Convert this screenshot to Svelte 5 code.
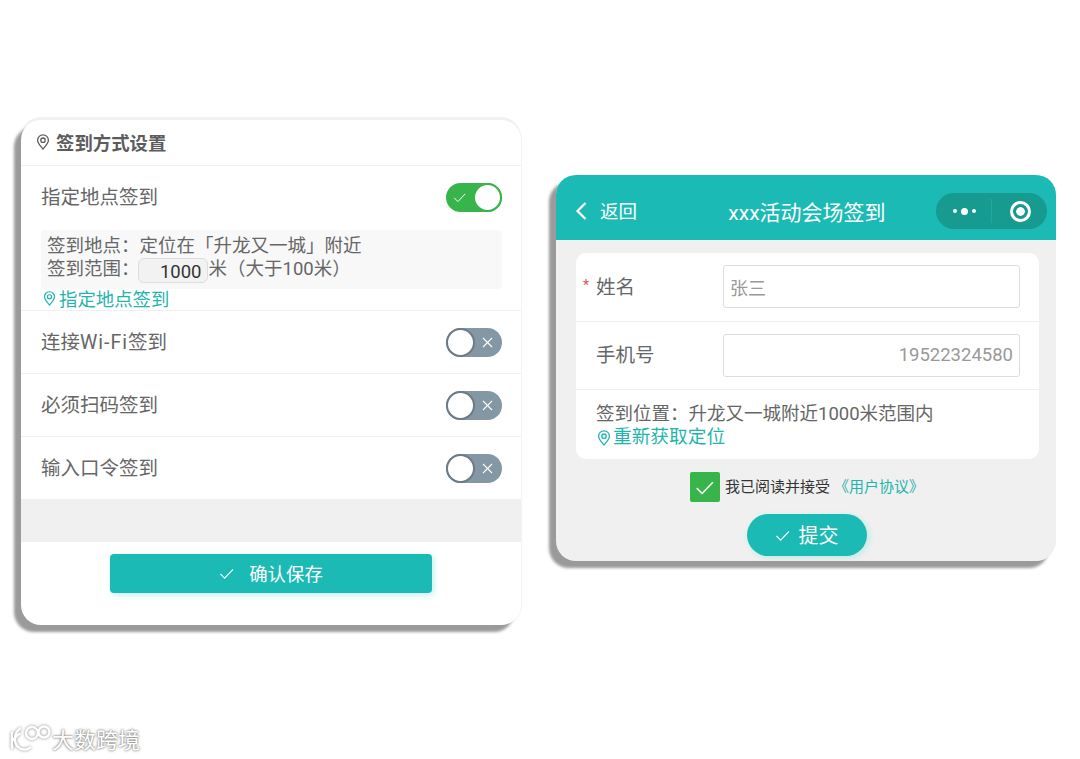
<script>
	// '|' marks the latin part of a label, it is set a little wider
	const toggles = ['连接|Wi-Fi|签到', '必须扫码签到', '输入口令签到'];
</script>

{#snippet pin(size)}
	<svg class="pin" width={size} height={size} viewBox="0 0 16 16" fill="none" stroke="currentColor" stroke-width="1.3">
		<path d="M8 15C5 11.6 2.6 9 2.6 6.2a5.4 5.4 0 0 1 10.8 0C13.4 9 11 11.6 8 15z" />
		<circle cx="8" cy="6.2" r="2.2" />
	</svg>
{/snippet}

{#snippet check(size, width = 1.2)}
	<svg width={size} height={size} viewBox="0 0 16 16" fill="none" stroke="currentColor" stroke-width={width}>
		<path d="M1.5 8.5l4.5 4.5 9-9.5" />
	</svg>
{/snippet}

<div class="stage">
	<section class="card settings">
		<h2 class="settings-title">{@render pin(16)}签到方式设置</h2>

		<div class="first-block">
			<div class="row first-row">
				<span>指定地点签到</span>
				<span class="toggle on">
					<span class="mark">{@render check(13)}</span>
					<span class="knob"></span>
				</span>
			</div>
			<div class="location-box">
				<div>签到地点：定位在「升龙又一城」附近</div>
				<div class="range">
					<span>签到范围：</span><span class="range-input">1000</span><span>米（大于100米）</span>
				</div>
			</div>
			<div class="link small-link">{@render pin(15)}指定地点签到</div>
		</div>

		{#each toggles as label}
			<div class="row">
				<span>
					{#each label.split('|') as part, i}<span class:latin={i === 1}>{part}</span>{/each}
				</span>
				<span class="toggle">
					<span class="knob"></span>
					<svg class="cross" width="11" height="11" viewBox="0 0 11 11" stroke="currentColor" stroke-width="1.1">
						<path d="M1 1l9 9M10 1l-9 9" />
					</svg>
				</span>
			</div>
		{/each}

		<div class="spacer"></div>
		<div class="save-wrap">
			<button class="save">{@render check(15)}<span>确认保存</span></button>
		</div>
	</section>

	<section class="card signin">
		<header class="nav">
			<div class="back">
				<svg width="12" height="20" viewBox="0 0 12 20" fill="none" stroke="currentColor" stroke-width="2.2">
					<path d="M10.5 2L2.5 10l8 8" />
				</svg>
				<span>返回</span>
			</div>
			<div class="nav-title">xxx活动会场签到</div>
			<div class="capsule">
				<span class="dots"><i></i><b></b><i></i></span>
				<span class="divider"></span>
				<span class="target"></span>
			</div>
		</header>

		<div class="body">
			<div class="form">
				<div class="field">
					<label><em>*</em>姓名</label>
					<div class="input placeholder">张三</div>
				</div>
				<div class="field">
					<label>手机号</label>
					<div class="input phone">19522324580</div>
				</div>
				<div class="position">
					<div>签到位置：升龙又一城附近1000米范围内</div>
					<div class="link">{@render pin(16)}重新获取定位</div>
				</div>
			</div>

			<div class="agree">
				<span class="checkbox">{@render check(19, 1.3)}</span>
				<span>我已阅读并接受</span>
				<span class="protocol">《用户协议》</span>
			</div>

			<button class="submit">{@render check(15)}<span>提交</span></button>
		</div>
	</section>

	<div class="watermark">
		<svg width="44" height="32" viewBox="0 0 44 32" fill="none" stroke="#fff" stroke-width="2.4">
			<path d="M4 10v17M13 6C6 10 5 20 10 25c4 4 10 3 13 0M4 19l8-8" />
			<circle cx="24" cy="11" r="6" />
			<circle cx="36" cy="10" r="5.5" />
		</svg>
		<span>大数跨境</span>
	</div>
</div>

<style>
	:global(body) {
		background: #fff;
	}
	.stage {
		position: relative;
		width: 1080px;
		height: 759px;
		display: flex;
		align-items: flex-start;
		gap: 35px;
		padding-left: 21px;
		box-sizing: border-box;
		overflow: hidden;
		font-family: Roboto, 'Noto Sans CJK SC', sans-serif;
		color: #666;
	}
	.card {
		width: 500px;
		flex: none;
		box-sizing: border-box;
		border-radius: 20px;
		overflow: hidden;
	}
	.settings {
		margin-top: 120px;
		height: 505px;
		background: #fff;
		box-shadow: -7px 7px 3px #9a9a9a, 0 -3px 0 #f1f1f1, 1px 0 1px #f3f3f3;
		display: flex;
		flex-direction: column;
	}
	.settings-title {
		height: 46px;
		margin: 0;
		padding: 0 0 2px 14px;
		box-sizing: border-box;
		display: flex;
		align-items: center;
		gap: 5px;
		font-size: 18.4px;
		font-weight: 700;
		color: #5c5c5c;
		border-bottom: 1px solid #f0f0f0;
	}
	.first-block {
		height: 145px;
		box-sizing: border-box;
		border-bottom: 1px solid #f0f0f0;
	}
	.row {
		height: 63px;
		box-sizing: border-box;
		padding: 0 19px 0 20px;
		display: flex;
		align-items: center;
		justify-content: space-between;
		font-size: 19.5px;
		color: #666;
		border-bottom: 1px solid #f0f0f0;
	}
	.row > span:first-child {
		margin-top: -4px;
	}
	.latin {
		letter-spacing: 1px;
	}
	.row.first-row {
		height: 64px;
		border-bottom: none;
		padding-bottom: 2px;
	}
	.toggle {
		width: 56px;
		height: 29px;
		box-sizing: border-box;
		border-radius: 15px;
		background: #8497a4;
		color: #fff;
		display: flex;
		align-items: center;
		justify-content: space-between;
		position: relative;
	}
	.toggle .knob {
		width: 29px;
		height: 29px;
		box-sizing: border-box;
		border-radius: 50%;
		background: #fff;
		border: 2px solid #6e7b85;
	}
	.toggle .cross {
		margin-right: 9px;
	}
	.toggle.on {
		background: #38b54a;
	}
	.toggle.on .knob {
		border-color: #38b54a;
	}
	.toggle.on .mark {
		margin-left: 7px;
		display: flex;
	}
	.location-box {
		margin: 0 19px 0 20px;
		height: 59px;
		padding: 0 0 4px 6px;
		box-sizing: border-box;
		background: #f8f8f8;
		border-radius: 4px;
		font-size: 18.5px;
		line-height: 23px;
		color: #666;
		display: flex;
		flex-direction: column;
		justify-content: center;
	}
	.range {
		display: flex;
		align-items: center;
		height: 23px;
	}
	.range-input {
		width: 70px;
		height: 25px;
		box-sizing: border-box;
		margin: 3px 1px 0 -2px;
		padding-right: 5px;
		background: #f2f2f2;
		border: 1px solid #ddd;
		border-radius: 6px;
		text-align: right;
		font-size: 18.5px;
		line-height: 26px;
		color: #333;
	}
	.link {
		display: flex;
		align-items: center;
		color: #1fb5ad;
	}
	.small-link {
		margin: -1px 0 0 21px;
		height: 20px;
		font-size: 18.4px;
		gap: 2px;
	}
	.spacer {
		height: 43px;
		background: #f0f0f0;
		margin-top: -1px;
	}
	.save-wrap {
		padding-top: 12px;
		display: flex;
		justify-content: center;
	}
	.save {
		width: 322px;
		height: 39px;
		border: none;
		border-radius: 4px;
		background: #1cbab4;
		box-shadow: 2px 2px 6px #bff0ec;
		color: #fff;
		font: inherit;
		font-size: 18.4px;
		display: flex;
		align-items: center;
		justify-content: center;
		gap: 15px;
	}
	.save span,
	.submit span {
		margin-top: -2px;
	}
	.signin {
		margin-top: 175px;
		height: 386px;
		background: #f0f0f0;
		box-shadow: -7px 7px 3px #9a9a9a;
		display: flex;
		flex-direction: column;
	}
	.nav {
		height: 65px;
		flex: none;
		box-sizing: border-box;
		background: #1cbab4;
		color: #fff;
		display: grid;
		grid-template-columns: 1fr auto 1fr;
		align-items: center;
		padding: 7px 9px 0 19px;
		font-size: 18.5px;
	}
	.back {
		display: flex;
		align-items: center;
		gap: 13px;
	}
	.back span {
		margin-top: -2px;
	}
	.nav-title {
		margin: -1px 8px 0 0;
		font-size: 21px;
	}
	.capsule {
		justify-self: end;
		width: 111px;
		height: 36px;
		border-radius: 18px;
		background: #179a90;
		display: flex;
		align-items: center;
	}
	.dots {
		width: 55px;
		display: flex;
		align-items: center;
		justify-content: center;
		gap: 4px;
		padding-left: 1px;
		box-sizing: border-box;
	}
	.dots i {
		width: 4px;
		height: 4px;
		border-radius: 50%;
		background: #fff;
	}
	.dots b {
		width: 7px;
		height: 7px;
		border-radius: 50%;
		background: #fff;
	}
	.divider {
		width: 1px;
		height: 24px;
		background: #1ba89e;
	}
	.target {
		width: 21px;
		height: 21px;
		margin-left: 18px;
		box-sizing: border-box;
		border-radius: 50%;
		border: 3px solid #fff;
		background: radial-gradient(circle, #fff 0 4px, transparent 4.6px);
	}
	.body {
		flex: 1;
		padding: 13px 17px 0 20px;
		display: flex;
		flex-direction: column;
		align-items: center;
	}
	.form {
		width: 100%;
		height: 206px;
		background: #fff;
		border-radius: 10px;
		overflow: hidden;
	}
	.field {
		height: 68.5px;
		box-sizing: border-box;
		padding-left: 20px;
		display: flex;
		align-items: center;
		border-bottom: 1px solid #eee;
		font-size: 19.5px;
		color: #666;
		position: relative;
	}
	.field label {
		width: 127px;
		flex: none;
		margin-top: -3px;
	}
	.field em {
		position: absolute;
		left: 7px;
		top: 24px;
		font-style: normal;
		font-size: 14px;
		color: #e0534f;
	}
	.input {
		width: 297px;
		height: 43px;
		box-sizing: border-box;
		border: 1px solid #ddd;
		border-radius: 3px;
		padding: 0 6px;
		display: flex;
		align-items: center;
		font-size: 18px;
		color: #999;
	}
	.phone {
		justify-content: flex-end;
		font-size: 18.5px;
	}
	.position {
		padding: 13px 0 0 20px;
		font-size: 18.5px;
		line-height: 23px;
		color: #666;
	}
	.position .link {
		font-size: 18.7px;
		gap: 1px;
	}
	.agree {
		margin-top: 13px;
		margin-left: -1px;
		height: 30px;
		display: flex;
		align-items: center;
		font-size: 15px;
		color: #333;
	}
	.agree > span:not(.checkbox) {
		margin-top: -4px;
	}
	.checkbox {
		width: 30px;
		height: 30px;
		margin-right: 5px;
		border-radius: 2px;
		background: #38b54a;
		color: #fff;
		display: flex;
		align-items: center;
		justify-content: center;
	}
	.protocol {
		margin-left: 4px;
		color: #1fb5ad;
	}
	.submit {
		width: 120px;
		height: 42px;
		margin-top: 12px;
		margin-left: -2px;
		border: none;
		border-radius: 21px;
		background: #1cbab4;
		box-shadow: 2px 2px 6px #bdebe7;
		color: #fff;
		font: inherit;
		font-size: 20px;
		display: flex;
		align-items: center;
		justify-content: center;
		gap: 9px;
	}
	.watermark {
		position: absolute;
		left: 8px;
		top: 722px;
		display: flex;
		align-items: center;
		gap: 0;
		font-size: 22px;
		color: #fff;
		text-shadow: 0 0 2px #777, 0 0 3px #999;
	}
	.watermark svg {
		filter: drop-shadow(0 0 1.5px #888);
	}
</style>
